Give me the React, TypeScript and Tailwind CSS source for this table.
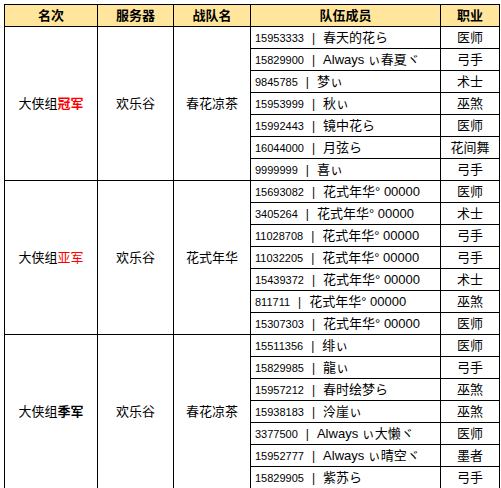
import React from 'react';

type Member = { id: string; name: string; job: string };

type Group = {
  prefix: string;
  title: string;
  titleClass: string;
  server: string;
  team: string;
  members: Member[];
};

const groups: Group[] = [
  {
    prefix: '大侠组',
    title: '冠军',
    titleClass: 'text-[#ff0000] font-bold',
    server: '欢乐谷',
    team: '春花凉茶',
    members: [
      { id: '15953333', name: '春天的花ら', job: '医师' },
      { id: '15829900', name: 'Always ぃ春夏ヾ', job: '弓手' },
      { id: '9845785', name: '梦ぃ', job: '术士' },
      { id: '15953999', name: '秋ぃ', job: '巫煞' },
      { id: '15992443', name: '镜中花ら', job: '医师' },
      { id: '16044000', name: '月弦ら', job: '花间舞' },
      { id: '9999999', name: '喜ぃ', job: '弓手' },
    ],
  },
  {
    prefix: '大侠组',
    title: '亚军',
    titleClass: 'text-[#ff0000]',
    server: '欢乐谷',
    team: '花式年华',
    members: [
      { id: '15693082', name: '花式年华° 00000', job: '医师' },
      { id: '3405264', name: '花式年华° 00000', job: '术士' },
      { id: '11028708', name: '花式年华° 00000', job: '弓手' },
      { id: '11032205', name: '花式年华° 00000', job: '弓手' },
      { id: '15439372', name: '花式年华° 00000', job: '术士' },
      { id: '811711', name: '花式年华° 00000', job: '巫煞' },
      { id: '15307303', name: '花式年华° 00000', job: '医师' },
    ],
  },
  {
    prefix: '大侠组',
    title: '季军',
    titleClass: 'font-bold',
    server: '欢乐谷',
    team: '春花凉茶',
    members: [
      { id: '15511356', name: '绯ぃ', job: '医师' },
      { id: '15829985', name: '龍ぃ', job: '弓手' },
      { id: '15957212', name: '春时绘梦ら', job: '巫煞' },
      { id: '15938183', name: '泠崖ぃ', job: '巫煞' },
      { id: '3377500', name: 'Always ぃ大懒ヾ', job: '医师' },
      { id: '15952777', name: 'Always ぃ晴空ヾ', job: '墨者' },
      { id: '15829905', name: '紫苏ら', job: '弓手' },
    ],
  },
];

const cell = 'border border-black';

export default function App() {
  return (
    <div
      className="bg-white w-[501px] h-[488px] pl-[4px] pt-[4px] text-black text-[12px]"
      style={{ fontFamily: '"Liberation Sans", "Noto Sans CJK SC", sans-serif' }}
    >
      <table className="border-collapse table-fixed w-[495px]">
        <colgroup>
          <col className="w-[93px]" />
          <col className="w-[76px]" />
          <col className="w-[77px]" />
          <col className="w-[190px]" />
          <col className="w-[59px]" />
        </colgroup>
        <thead>
          <tr className="h-[22px] bg-[#ffe69c] text-[13px] font-bold">
            <th className={cell}>名次</th>
            <th className={cell}>服务器</th>
            <th className={cell}>战队名</th>
            <th className={cell}>队伍成员</th>
            <th className={cell}>职业</th>
          </tr>
        </thead>
        <tbody>
          {groups.map((g) =>
            g.members.map((m, i) => (
              <tr key={g.title + m.id + i} className="h-[22px]">
                {i === 0 && (
                  <>
                    <td rowSpan={7} className={`${cell} text-center align-middle text-[13px]`}>
                      {g.prefix}
                      <span className={g.titleClass}>{g.title}</span>
                    </td>
                    <td rowSpan={7} className={`${cell} text-center align-middle text-[13px]`}>
                      {g.server}
                    </td>
                    <td rowSpan={7} className={`${cell} text-center align-middle text-[13px]`}>
                      {g.team}
                    </td>
                  </>
                )}
                <td className={`${cell} pl-[4px] whitespace-nowrap leading-none`}>
                  <span className="text-[11px]">{m.id}</span>
                  <span className="px-[8px]">|</span>
                  <span className="text-[13px]">{m.name}</span>
                </td>
                <td className={`${cell} text-center text-[13px] leading-none`}>{m.job}</td>
              </tr>
            ))
          )}
        </tbody>
      </table>
    </div>
  );
}
